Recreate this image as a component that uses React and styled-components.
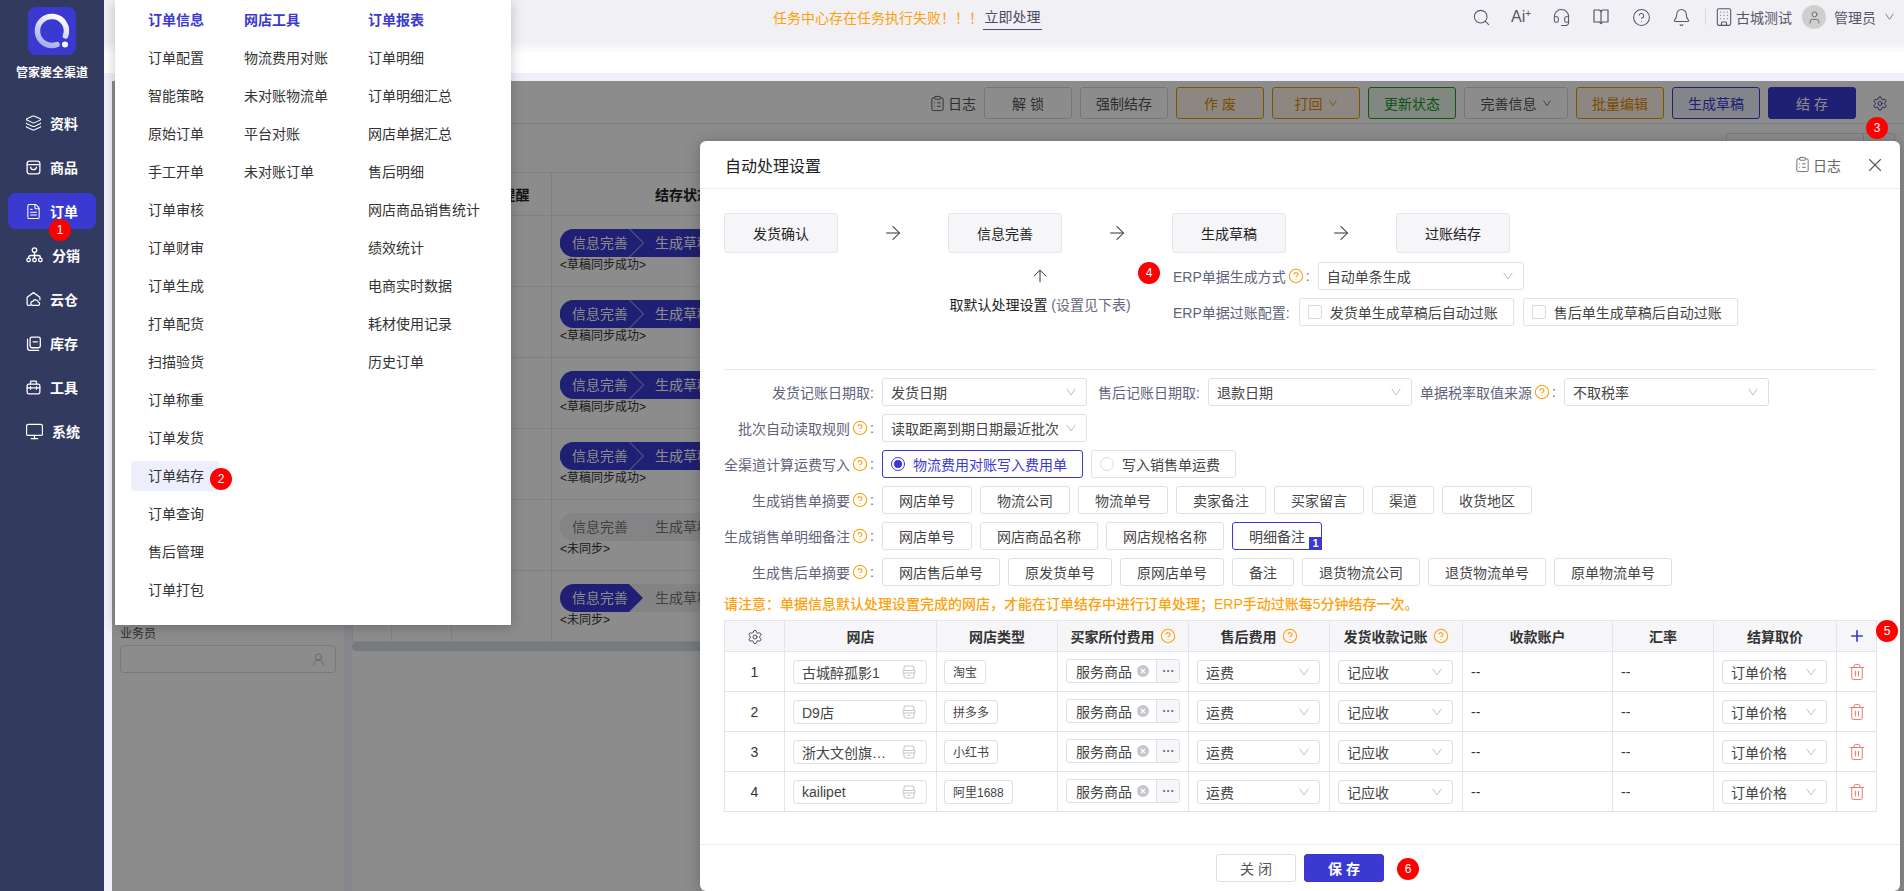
import React from "react";
import styled, { createGlobalStyle, css } from "styled-components";
import {
  Layers, FileText, Monitor, Search, Headset, CircleHelp, Bell, Building, User,
  ArrowRight, ArrowUp, ClipboardList, X, Settings, Plus, Trash2, Ellipsis, UserRound,
} from "lucide-react";

const BLUE = "#3a39d2";
const ORANGE = "#ff9f0a";
const LINE = "#e4e4ec";

const Global = createGlobalStyle`
  html, body { margin: 0; padding: 0; height: 100%; overflow: hidden; background: #fff; }
  body { font-family: "Liberation Sans", "Noto Sans CJK SC", sans-serif; font-size: 14px; color: #333; }
  #root { height: 100%; }
  * { box-sizing: border-box; }
`;

const Page = styled.div`
  position: relative;
  display: flex;
  width: 1904px;
  height: 891px;
  overflow: hidden;
`;

/* sidebar */
const Sidebar = styled.aside`
  width: 104px;
  flex: none;
  background: #333a60;
  display: flex;
  flex-direction: column;
  align-items: center;
  padding-top: 7px;
`;
const LogoTitle = styled.div`
  margin-top: 10px;
  height: 16px;
  line-height: 16px;
  font-size: 12px;
  font-weight: 700;
  color: #fff;
  white-space: nowrap;
`;
const Nav = styled.nav`
  margin-top: 24px;
  display: flex;
  flex-direction: column;
  gap: 8px;
  width: 88px;
`;
const NavItem = styled.div`
  position: relative;
  height: 36px;
  border-radius: 8px;
  display: flex;
  align-items: center;
  padding-left: 17px;
  gap: 8px;
  color: #fff;
  font-size: 14px;
  font-weight: 700;
  background: ${(p) => (p.$active ? BLUE : "transparent")};
`;
const NavIcon = styled.span`
  width: ${(p) => (p.$wide ? 19 : 17)}px;
  flex: none;
  display: flex;
  align-items: center;
  justify-content: center;
`;
const Badge = styled.span`
  position: absolute;
  left: ${(p) => p.$x}px;
  top: ${(p) => p.$y}px;
  width: 22px;
  height: 22px;
  margin: -11px 0 0 -11px;
  border-radius: 50%;
  background: #ff0000;
  color: #fff;
  font-size: 12px;
  font-weight: 400;
  display: flex;
  align-items: center;
  justify-content: center;
  z-index: 30;
`;

/* main column */
const Main = styled.div`
  flex: 1;
  min-width: 0;
  display: flex;
  flex-direction: column;
  background: #f1f1fb;
`;
const Header = styled.header`
  height: 73px;
  flex: none;
  background: linear-gradient(#f1f1f5 42px, #fff 54px);
`;
const HeaderBar = styled.div`
  height: 34px;
  display: flex;
  align-items: center;
  padding-left: 669px;
`;
const Warning = styled.span`
  color: ${ORANGE};
  font-size: 14px;
  white-space: nowrap;
`;
const HandleLink = styled.span`
  width: 59px;
  height: 26px;
  line-height: 26px;
  text-align: center;
  color: #4a4a60;
  border-bottom: 1px solid #4a4a78;
  white-space: nowrap;
`;
const HeaderTools = styled.div`
  margin-left: auto;
  display: flex;
  align-items: center;
  color: #55566a;
  padding-right: 10px;
  font-size: 14px;
`;
const ToolIcon = styled.span`
  width: 40px;
  display: flex;
  justify-content: center;
  align-items: center;
  font-size: 16px;
  sup { font-size: 10px; line-height: 1; margin-top: -6px; }
`;
const HeadDivider = styled.span`
  width: 1px;
  height: 16px;
  background: #d6d8e4;
  margin: 0 8px 0 4px;
`;
const CompanyName = styled.span`
  margin-left: 2px;
  white-space: nowrap;
`;
const Avatar = styled.span`
  width: 24px;
  height: 24px;
  margin: 0 8px 0 10px;
  border-radius: 50%;
  background: #cfcfcf;
  display: flex;
  align-items: center;
  justify-content: center;
  color: #666;
`;
const HeadChevron = styled.span`
  display: flex;
  margin-left: 9px;
  color: #777;
`;
const Band = styled.div`
  height: 8px;
  flex: none;
  background: #eff0fc;
`;
const Workspace = styled.div`
  flex: 1;
  min-height: 0;
  margin-left: 8px;
  position: relative;
  display: flex;
  background: #fff;
`;
const Overlay = styled.div`
  position: absolute;
  inset: 0;
  background: rgba(0, 0, 0, 0.45);
  z-index: 10;
`;
const LeftPanel = styled.div`
  width: 232px;
  flex: none;
  padding: 544px 0 0 8px;
`;
const FieldLabel = styled.div`
  height: 18px;
  line-height: 18px;
  font-size: 12px;
  color: #555;
  margin-bottom: 2px;
`;
const PersonInput = styled.div`
  width: 216px;
  height: 28px;
  border: 1px solid #dcdce4;
  border-radius: 4px;
  display: flex;
  align-items: center;
  justify-content: flex-end;
  padding-right: 9px;
  color: #aaa;
`;
const Splitter = styled.div`
  width: 8px;
  flex: none;
  background: #f2f2fc;
`;
const RightArea = styled.div`
  flex: 1;
  min-width: 0;
`;
const Toolbar = styled.div`
  height: 43px;
  border-bottom: 1px solid #e6e6ec;
  display: flex;
  justify-content: flex-end;
  align-items: flex-start;
  padding: 6px 16px 0 0;
  gap: 8px;
`;
const LogLink = styled.span`
  display: inline-flex;
  align-items: center;
  gap: 2px;
  color: ${(p) => p.$color || "#555"};
  height: ${(p) => (p.$bar ? "32px" : "auto")};
  font-size: 14px;
  white-space: nowrap;
`;
const toneStyles = {
  plain: css`border-color: #d8d8de; background: #fff; color: #555;`,
  orange: css`border-color: #f39200; background: #fff8ec; color: #e08a00;`,
  green: css`border-color: #18a218; background: #ebf8eb; color: #18981f;`,
  blue: css`border-color: ${BLUE}; background: #f0f0fd; color: ${BLUE};`,
  solid: css`border-color: ${BLUE}; background: ${BLUE}; color: #fff;`,
};
const ToolBtn = styled.button`
  width: ${(p) => p.$w || 88}px;
  height: 32px;
  border: 1px solid;
  border-radius: 3px;
  font: inherit;
  font-size: 14px;
  padding: 0;
  display: inline-flex;
  align-items: center;
  justify-content: center;
  gap: 3px;
  white-space: pre;
  ${(p) => toneStyles[p.$tone || "plain"]};
`;
const GearBtn = styled.span`
  width: 16px;
  height: 32px;
  margin-left: 8px;
  display: flex;
  align-items: center;
  justify-content: center;
  color: #3f3f95;
`;
const FilterRow = styled.div`
  height: 48px;
  display: flex;
  justify-content: flex-end;
  padding: 9px 9px 0 0;
`;
const MiniSearch = styled.div`
  width: 169px;
  height: 28px;
  border: 1px solid #dcdce4;
  border-radius: 3px;
  display: flex;
  justify-content: flex-end;
`;
const MiniAddon = styled.span`
  width: 31px;
  border-left: 1px solid #dcdce4;
`;
const BgTable = styled.table`
  border-collapse: collapse;
  table-layout: fixed;
  width: 900px;
  th, td { border: 1px solid #e9e9ee; }
  th { height: 43px; font-size: 14px; font-weight: 700; color: #222; }
  td { height: 71px; padding: 13px 0 0 8px; vertical-align: top; }
`;
const Chain = styled.div`
  width: 240px;
  height: 28px;
  display: flex;
  border-radius: 14px 0 0 14px;
  background: ${(p) => (p.$on ? BLUE : "#f0f0f6")};
`;
const FirstWrap = styled.div`
  filter: drop-shadow(1px 0 0 rgba(255, 255, 255, ${(p) => (p.$line ? 0.75 : 0)}));
`;
const FirstStep = styled.div`
  width: 83px;
  height: 28px;
  border-radius: 14px 0 0 14px;
  padding-left: 12px;
  line-height: 28px;
  clip-path: polygon(0 0, 69px 0, 100% 50%, 69px 100%, 0 100%);
  background: ${(p) => (p.$on ? BLUE : "#f0f0f6")};
  color: ${(p) => (p.$on ? "#fff" : "#777")};
  white-space: nowrap;
`;
const SecondStep = styled.div`
  padding-left: 12px;
  line-height: 28px;
  color: ${(p) => (p.$on ? "#fff" : "#777")};
  white-space: nowrap;
`;
const Caption = styled.div`
  font-size: 12px;
  line-height: 16px;
  color: #333;
`;
const HScroll = styled.div`
  width: 650px;
  height: 9px;
  border-radius: 4px;
  background: #d5dee7;
`;

/* cascading menu */
const MenuPanel = styled.div`
  position: absolute;
  left: 115px;
  top: 0;
  width: 396px;
  height: 625px;
  background: #fff;
  box-shadow: 0 2px 12px rgba(0, 0, 0, 0.22);
  z-index: 20;
  display: flex;
  padding: 1px 0 0 33px;
`;
const MenuCol = styled.div`
  width: ${(p) => p.$w}px;
  display: flex;
  flex-direction: column;
  align-items: flex-start;
`;
const MenuHead = styled.div`
  height: 38px;
  line-height: 38px;
  font-weight: 700;
  color: ${BLUE};
  white-space: nowrap;
`;
const MenuLink = styled.div`
  position: relative;
  height: 30px;
  line-height: 30px;
  margin: 4px 0 4px -17px;
  padding: 0 15px 0 17px;
  border-radius: 3px;
  color: #333;
  white-space: nowrap;
  background: ${(p) => (p.$active ? "#eeeffd" : "transparent")};
`;

/* modal */
const Modal = styled.div`
  position: absolute;
  left: 700px;
  top: 141px;
  width: 1200px;
  height: 750px;
  background: #fff;
  border-radius: 6px;
  box-shadow: 0 2px 16px rgba(0, 0, 0, 0.25);
  z-index: 20;
  display: flex;
  flex-direction: column;
`;
const ModalHead = styled.div`
  height: 48px;
  flex: none;
  border-bottom: 1px solid #eaeaf0;
  display: flex;
  align-items: center;
  padding: 0 14px 0 25px;
`;
const ModalTitle = styled.div`
  font-size: 16px;
  color: #222;
  flex: 1;
`;
const CloseX = styled.span`
  display: flex;
  margin-left: 23px;
  color: #555;
`;
const ModalBody = styled.div`
  flex: 1;
  min-height: 0;
  padding: 24px 24px 0;
`;
const FlowRow = styled.div`
  display: grid;
  grid-template-columns: 114px 110px 114px 110px 114px 110px 114px;
  align-items: center;
  justify-items: center;
  width: 786px;
`;
const FlowBox = styled.div`
  width: 114px;
  height: 40px;
  border: 1px solid #e6e6ee;
  border-radius: 3px;
  background: #f6f6f9;
  display: flex;
  align-items: center;
  justify-content: center;
  color: #222;
`;
const FlowLower = styled.div`
  display: flex;
  padding-left: 223px;
  margin-top: 9px;
`;
const DefaultBlock = styled.div`
  width: 186px;
  flex: none;
  display: flex;
  flex-direction: column;
  align-items: center;
  padding-top: 4px;
  color: #333;
`;
const DefaultText = styled.div`
  margin-top: 9px;
  height: 20px;
  line-height: 20px;
  font-size: 14px;
  white-space: nowrap;
  color: #222;
  span { color: #666a80; }
`;
const ConfigBlock = styled.div`
  position: relative;
  margin-left: 40px;
  display: flex;
  flex-direction: column;
  gap: 8px;
`;
const Divider = styled.div`
  height: 1px;
  background: #e8e8ee;
  margin: 43px 0 8px;
`;
const Form = styled.div`
  display: flex;
  flex-direction: column;
  gap: 8px;
`;
const Row = styled.div`
  height: 28px;
  display: flex;
  align-items: center;
  gap: ${(p) => p.$gap || 8}px;
`;
const Label = styled.div`
  ${(p) => p.$w && `width: ${p.$w}px;`}
  flex: none;
  display: flex;
  align-items: center;
  justify-content: flex-end;
  color: #62637a;
  font-size: 14px;
  white-space: nowrap;
  gap: 2px;
`;
const Help = styled(CircleHelp).attrs({ size: 16, strokeWidth: 1.6 })`
  color: ${ORANGE};
  flex: none;
`;
const Select = styled.div`
  width: ${(p) => (p.$w ? `${p.$w}px` : "100%")};
  height: ${(p) => p.$h || 28}px;
  flex: none;
  border: 1px solid #dedfe7;
  border-radius: 3px;
  background: #fff;
  display: flex;
  align-items: center;
  justify-content: space-between;
  padding: 0 8px;
  color: #444;
  white-space: nowrap;
  svg { color: #bfc0c8; flex: none; margin-right: 2px; }
`;
const Chip = styled.div`
  position: relative;
  height: 28px;
  flex: none;
  display: flex;
  align-items: center;
  gap: 8px;
  padding: ${(p) => (p.$control ? "0 15px 0 8px" : "0 16px")};
  border: 1px solid ${(p) => (p.$on ? BLUE : "#dedfe7")};
  border-radius: 3px;
  color: ${(p) => (p.$on && p.$control ? BLUE : "#444")};
  background: #fff;
  white-space: nowrap;
`;
const Corner = styled.span`
  position: absolute;
  right: -1px;
  bottom: -1px;
  width: 13px;
  height: 13px;
  background: ${BLUE};
  color: #fff;
  font-size: 11px;
  font-weight: 700;
  line-height: 13px;
  text-align: center;
`;
const Check = styled.span`
  width: 14px;
  height: 14px;
  flex: none;
  border: 1px solid #d9d9e2;
  border-radius: 2px;
`;
const Radio = styled.span`
  width: 14px;
  height: 14px;
  flex: none;
  border-radius: 50%;
  border: 1px solid ${(p) => (p.$on ? BLUE : "#dcdce4")};
  display: flex;
  align-items: center;
  justify-content: center;
  &::after {
    content: "";
    width: 8px;
    height: 8px;
    border-radius: 50%;
    background: ${(p) => (p.$on ? BLUE : "transparent")};
  }
`;
const Notice = styled.div`
  height: 20px;
  line-height: 20px;
  margin-top: 8px;
  color: ${ORANGE};
  font-weight: 500;
  white-space: nowrap;
`;
const GridWrap = styled.div`
  position: relative;
  margin-top: 6px;
  width: 1152px;
`;
const Grid = styled.table`
  border-collapse: collapse;
  table-layout: fixed;
  width: 1152px;
  th, td { border: 1px solid ${LINE}; padding: 0; }
  th {
    height: 31px;
    background: #f6f6f9;
    font-weight: 700;
    font-size: 14px;
    color: #333;
    text-align: center;
    white-space: nowrap;
  }
  td { height: 40px; }
`;
const ThInner = styled.span`
  display: inline-flex;
  align-items: center;
  justify-content: center;
  gap: 5px;
  vertical-align: middle;
  color: ${(p) => p.$color || "inherit"};
`;
const NumCell = styled.td`
  text-align: center;
  color: #333;
`;
const PadCell = styled.td`
  && { padding: 0 ${(p) => p.$pad ?? 9}px 0 ${(p) => p.$pad ?? 8}px; }
`;
const DashCell = styled.td`
  && { padding-left: 8px; }
  color: #333;
`;
const ShopBox = styled.div`
  height: 24px;
  border: 1px solid #dedfe7;
  border-radius: 3px;
  display: flex;
  align-items: center;
  padding: 0 10px 0 8px;
  gap: 6px;
  color: #444;
  svg { flex: none; color: #c6c7d0; }
`;
const ShopName = styled.span`
  flex: 1;
  min-width: 0;
  overflow: hidden;
  text-overflow: ellipsis;
  white-space: nowrap;
`;
const TypeTag = styled.span`
  display: inline-flex;
  align-items: center;
  height: 24px;
  padding: 0 8px;
  border: 1px solid #dedfe7;
  border-radius: 3px;
  font-size: 12px;
  color: #444;
`;
const FeeGroup = styled.div`
  height: 24px;
  margin-top: -1px;
  display: flex;
  border: 1px solid #dedfe7;
  border-radius: 3px;
`;
const FeeValue = styled.div`
  flex: 1;
  display: flex;
  align-items: center;
  gap: 5px;
  padding-left: 9px;
  color: #444;
  white-space: nowrap;
`;
const FeeMore = styled.div`
  width: 23px;
  flex: none;
  border-left: 1px solid #dedfe7;
  background: #f6f6f9;
  display: flex;
  align-items: center;
  justify-content: center;
  color: #555;
`;
const DelCell = styled.td`
  text-align: center;
  color: #f56c5c;
  svg { vertical-align: middle; }
`;
const ModalFoot = styled.div`
  height: 47px;
  flex: none;
  border-top: 1px solid #eaeaf0;
  display: flex;
  align-items: center;
  justify-content: center;
  gap: 8px;
`;
const FootBtn = styled.button`
  position: relative;
  width: 80px;
  height: 28px;
  border: 1px solid ${(p) => (p.$primary ? BLUE : "#dedfe7")};
  border-radius: 3px;
  background: ${(p) => (p.$primary ? BLUE : "#fff")};
  color: ${(p) => (p.$primary ? "#fff" : "#555")};
  font: inherit;
  font-weight: ${(p) => (p.$primary ? 700 : 400)};
  padding: 0;
  white-space: pre;
`;

/* drawings */
const Logo = () => (
  <svg width="48" height="48" viewBox="0 0 48 48">
    <defs>
      <linearGradient id="ring" x1="0.8" y1="0" x2="0.3" y2="1">
        <stop offset="0" stopColor="#ffffff" />
        <stop offset="1" stopColor="#aab0ee" />
      </linearGradient>
    </defs>
    <rect width="48" height="48" rx="8" fill={BLUE} />
    <path d="M37.5 29 A14.5 14.5 0 1 0 29 37.5" fill="none" stroke="url(#ring)" strokeWidth="5.5" strokeLinecap="round" />
    <circle cx="37" cy="37.5" r="3" fill="#fff" />
  </svg>
);
const sv = { width: 17, height: 17, viewBox: "0 0 20 20", fill: "none", stroke: "currentColor", strokeWidth: 1.5, strokeLinecap: "round", strokeLinejoin: "round" };
const BagIcon = () => (
  <svg {...sv}><rect x="2.5" y="2.5" width="15" height="15" rx="3" /><path d="M2.5 6.5h15M6.5 9.5c.5 4 6.5 4 7 0" /></svg>
);
const CloudHomeIcon = () => (
  <svg {...sv} width="18" height="18"><path d="M6 17.5H4a1.5 1.5 0 0 1-1.5-1.5V8L10 2.5 17.5 8v3" /><path d="M9 17.5a2.3 2.3 0 0 1 .3-4.6 3.3 3.3 0 0 1 6.3.8 2 2 0 0 1 .4 3.8z" /></svg>
);
const StockIcon = () => (
  <svg {...sv}><path d="M3 5v10a3 3 0 0 0 3 3h10" /><rect x="6" y="2.5" width="12" height="12.5" rx="2" /><path d="M9.5 8h5" /></svg>
);
const ToolboxIcon = () => (
  <svg {...sv}><rect x="2.5" y="6" width="15" height="11.5" rx="2" /><path d="M6.5 6V3.5a1 1 0 0 1 1-1h5a1 1 0 0 1 1 1V6M2.5 10.5h15M6.5 9v3M13.5 9v3" /></svg>
);
const BranchIcon = () => (
  <svg {...sv} width="19" height="18">
    <circle cx="10" cy="4.5" r="2.5" />
    <circle cx="3.5" cy="15.5" r="2" /><circle cx="10" cy="15.5" r="2" /><circle cx="16.5" cy="15.5" r="2" />
    <path d="M10 7v6.5M3.5 13.5V12.5a2 2 0 0 1 2-2h9a2 2 0 0 1 2 2v1" />
  </svg>
);
const ManualIcon = () => (
  <svg width="18" height="18" viewBox="0 0 18 18" fill="none" stroke="currentColor" strokeWidth="1.2" strokeLinejoin="round">
    <path d="M2 2h5.500L9 3.500 10.500 2H16v12h-5.500L9 15.500 7.500 14H2z" /><path d="M9 3.500v12" />
  </svg>
);
const ShopIcon = () => (
  <svg width="14" height="14" viewBox="0 0 14 14" fill="none" stroke="currentColor" strokeWidth="1.1">
    <path d="M2 6V3a2 2 0 0 1 2-2h6a2 2 0 0 1 2 2v3" />
    <rect x="1" y="5.5" width="12" height="2.5" rx="1" />
    <path d="M2 8v3.5a1.5 1.5 0 0 0 1.5 1.5h7a1.5 1.5 0 0 0 1.5-1.5V8M5.5 10.500h3" />
  </svg>
);
const ClearDot = () => (
  <svg width="12" height="12" viewBox="0 0 12 12">
    <circle cx="6" cy="6" r="6" fill="#c6c6ce" />
    <path d="M4 4l4 4M8 4l-4 4" stroke="#fff" strokeWidth="1.1" />
  </svg>
);
const Chev = ({ size = 10 }) => (
  <svg width={size} height={size * 0.8} viewBox="0 0 10 8" fill="none" stroke="currentColor" strokeWidth="1">
    <path d="M.7.8 5 7 9.300.8" />
  </svg>
);

const SIDE = [
  ["资料", <Layers key="a" size={18} strokeWidth={1.5} />],
  ["商品", <BagIcon key="b" />],
  ["订单", <FileText key="c" size={19} strokeWidth={1.5} />],
  ["分销", <BranchIcon key="d" />, true],
  ["云仓", <CloudHomeIcon key="e" />],
  ["库存", <StockIcon key="f" />],
  ["工具", <ToolboxIcon key="g" />],
  ["系统", <Monitor key="h" size={19} strokeWidth={1.5} />, true],
];
const MENU_A = ["订单配置", "智能策略", "原始订单", "手工开单", "订单审核", "订单财审", "订单生成", "打单配货", "扫描验货", "订单称重", "订单发货", "订单结存", "订单查询", "售后管理", "订单打包"];
const MENU_B = ["物流费用对账", "未对账物流单", "平台对账", "未对账订单"];
const MENU_C = ["订单明细", "订单明细汇总", "网店单据汇总", "售后明细", "网店商品销售统计", "绩效统计", "电商实时数据", "耗材使用记录", "历史订单"];

const BG_ROWS = [
  { first: true, second: true, cap: "<草稿同步成功>" },
  { first: true, second: true, cap: "<草稿同步成功>" },
  { first: true, second: true, cap: "<草稿同步成功>" },
  { first: true, second: true, cap: "<草稿同步成功>" },
  { first: false, second: false, cap: "<未同步>" },
  { first: true, second: false, cap: "<未同步>" },
];
const SHOPS = [
  ["古城醉孤影1", "淘宝"],
  ["D9店", "拼多多"],
  ["浙大文创旗舰店铺", "小红书"],
  ["kailipet", "阿里1688"],
];
const COLS = [60, 152, 121, 131, 141, 133, 150, 101, 123, 40];
const WARNING_TEXT = "任务中心存在任务执行失败\uFF01\uFF01\uFF01";
const NOTICE_TEXT = "请注意\uFF1A单据信息默认处理设置完成的网店\uFF0C才能在订单结存中进行订单处理\uFF1BERP手动过账每5分钟结存一次。";

export default function App() {
  return (
    <Page>
      <Global />
      <Sidebar>
        <Logo />
        <LogoTitle>管家婆全渠道</LogoTitle>
        <Nav>
          {SIDE.map(([name, icon, wide]) => (
            <NavItem key={name} $active={name === "订单"}>
              <NavIcon $wide={wide}>{icon}</NavIcon>
              {name}
              {name === "订单" && <Badge $x={52} $y={37}>1</Badge>}
            </NavItem>
          ))}
        </Nav>
      </Sidebar>

      <Main>
        <Header>
          <HeaderBar>
            <Warning>{WARNING_TEXT}</Warning>
            <HandleLink>立即处理</HandleLink>
            <HeaderTools>
              <ToolIcon><Search size={19} strokeWidth={1.3} /></ToolIcon>
              <ToolIcon>Ai<sup>+</sup></ToolIcon>
              <ToolIcon><Headset size={19} strokeWidth={1.3} /></ToolIcon>
              <ToolIcon><ManualIcon /></ToolIcon>
              <ToolIcon><CircleHelp size={19} strokeWidth={1.3} /></ToolIcon>
              <ToolIcon><Bell size={19} strokeWidth={1.3} /></ToolIcon>
              <HeadDivider />
              <Building size={20} strokeWidth={1.3} />
              <CompanyName>古城测试</CompanyName>
              <Avatar><User size={15} strokeWidth={1.4} /></Avatar>
              管理员
              <HeadChevron><Chev size={9} /></HeadChevron>
            </HeaderTools>
          </HeaderBar>
        </Header>
        <Band />
        <Workspace>
          <LeftPanel>
            <FieldLabel>业务员</FieldLabel>
            <PersonInput><UserRound size={15} strokeWidth={1.2} /></PersonInput>
          </LeftPanel>
          <Splitter />
          <RightArea>
            <Toolbar>
              <LogLink $bar><ClipboardList size={17} strokeWidth={1.3} />日志</LogLink>
              <ToolBtn>解 锁</ToolBtn>
              <ToolBtn>强制结存</ToolBtn>
              <ToolBtn $tone="orange">作 废</ToolBtn>
              <ToolBtn $tone="orange">打回 <Chev size={8} /></ToolBtn>
              <ToolBtn $tone="green">更新状态</ToolBtn>
              <ToolBtn $w={104}>完善信息 <Chev size={8} /></ToolBtn>
              <ToolBtn $tone="orange">批量编辑</ToolBtn>
              <ToolBtn $tone="blue">生成草稿</ToolBtn>
              <ToolBtn $tone="solid">结 存</ToolBtn>
              <GearBtn><Settings size={17} strokeWidth={1.4} /></GearBtn>
            </Toolbar>
            <FilterRow>
              <MiniSearch><MiniAddon /></MiniSearch>
            </FilterRow>
            <BgTable>
              <colgroup>
                <col width="39" /><col width="60" /><col width="100" /><col width="263" /><col />
              </colgroup>
              <thead>
                <tr><th /><th /><th>结存提醒</th><th>结存状态</th><th /></tr>
              </thead>
              <tbody>
                {BG_ROWS.map((r, i) => (
                  <tr key={i}>
                    <td /><td /><td />
                    <td>
                      <Chain $on={r.second}>
                        <FirstWrap $line={r.first === r.second}>
                          <FirstStep $on={r.first}>信息完善</FirstStep>
                        </FirstWrap>
                        <SecondStep $on={r.second}>生成草稿</SecondStep>
                      </Chain>
                      <Caption>{r.cap}</Caption>
                    </td>
                    <td />
                  </tr>
                ))}
              </tbody>
            </BgTable>
            <HScroll />
          </RightArea>
          <Overlay />
        </Workspace>
      </Main>

      <MenuPanel>
        <MenuCol $w={96}>
          <MenuHead>订单信息</MenuHead>
          {MENU_A.map((m) => (
            <MenuLink key={m} $active={m === "订单结存"}>
              {m}
              {m === "订单结存" && <Badge $x={90} $y={18}>2</Badge>}
            </MenuLink>
          ))}
        </MenuCol>
        <MenuCol $w={124}>
          <MenuHead>网店工具</MenuHead>
          {MENU_B.map((m) => <MenuLink key={m}>{m}</MenuLink>)}
        </MenuCol>
        <MenuCol $w={120}>
          <MenuHead>订单报表</MenuHead>
          {MENU_C.map((m) => <MenuLink key={m}>{m}</MenuLink>)}
        </MenuCol>
      </MenuPanel>

      <Badge $x={1877} $y={128}>3</Badge>

      <Modal>
        <ModalHead>
          <ModalTitle>自动处理设置</ModalTitle>
          <LogLink $color="#666"><ClipboardList size={17} strokeWidth={1.3} />日志</LogLink>
          <CloseX><X size={22} strokeWidth={1.2} /></CloseX>
        </ModalHead>
        <ModalBody>
          <FlowRow>
            <FlowBox>发货确认</FlowBox>
            <ArrowRight size={22} strokeWidth={1.1} />
            <FlowBox>信息完善</FlowBox>
            <ArrowRight size={22} strokeWidth={1.1} />
            <FlowBox>生成草稿</FlowBox>
            <ArrowRight size={22} strokeWidth={1.1} />
            <FlowBox>过账结存</FlowBox>
          </FlowRow>
          <FlowLower>
            <DefaultBlock>
              <ArrowUp size={20} strokeWidth={1.2} />
              <DefaultText>取默认处理设置 <span>(设置见下表)</span></DefaultText>
            </DefaultBlock>
            <ConfigBlock>
              <Badge $x={-24} $y={11}>4</Badge>
              <Row>
                <Label>ERP单据生成方式<Help />:</Label>
                <Select $w={206}>自动单条生成<Chev /></Select>
              </Row>
              <Row $gap={9}>
                <Label>ERP单据过账配置:</Label>
                <Chip $control><Check />发货单生成草稿后自动过账</Chip>
                <Chip $control><Check />售后单生成草稿后自动过账</Chip>
              </Row>
            </ConfigBlock>
          </FlowLower>
          <Divider />
          <Form>
            <Row>
              <Label $w={150}>发货记账日期取:</Label>
              <Select $w={205}>发货日期<Chev /></Select>
              <Label $w={105}>售后记账日期取:</Label>
              <Select $w={204}>退款日期<Chev /></Select>
              <Label $w={136}>单据税率取值来源<Help />:</Label>
              <Select $w={205}>不取税率<Chev /></Select>
            </Row>
            <Row>
              <Label $w={150}>批次自动读取规则<Help />:</Label>
              <Select $w={205}>读取距离到期日期最近批次<Chev /></Select>
            </Row>
            <Row>
              <Label $w={150}>全渠道计算运费写入<Help />:</Label>
              <Chip $control $on><Radio $on />物流费用对账写入费用单</Chip>
              <Chip $control><Radio />写入销售单运费</Chip>
            </Row>
            <Row>
              <Label $w={150}>生成销售单摘要<Help />:</Label>
              {["网店单号", "物流公司", "物流单号", "卖家备注", "买家留言", "渠道", "收货地区"].map((t) => <Chip key={t}>{t}</Chip>)}
            </Row>
            <Row>
              <Label $w={150}>生成销售单明细备注<Help />:</Label>
              <Chip>网店单号</Chip>
              <Chip>网店商品名称</Chip>
              <Chip>网店规格名称</Chip>
              <Chip $on>明细备注<Corner>1</Corner></Chip>
            </Row>
            <Row>
              <Label $w={150}>生成售后单摘要<Help />:</Label>
              {["网店售后单号", "原发货单号", "原网店单号", "备注", "退货物流公司", "退货物流单号", "原单物流单号"].map((t) => <Chip key={t}>{t}</Chip>)}
            </Row>
          </Form>
          <Notice>{NOTICE_TEXT}</Notice>
          <GridWrap>
            <Badge $x={1163} $y={11}>5</Badge>
            <Grid>
              <colgroup>{COLS.map((w, i) => <col key={i} width={w} />)}</colgroup>
              <thead>
                <tr>
                  <th><ThInner><Settings size={16} strokeWidth={1.3} /></ThInner></th>
                  <th>网店</th>
                  <th>网店类型</th>
                  <th><ThInner>买家所付费用<Help /></ThInner></th>
                  <th><ThInner>售后费用<Help /></ThInner></th>
                  <th><ThInner>发货收款记账<Help /></ThInner></th>
                  <th>收款账户</th>
                  <th>汇率</th>
                  <th>结算取价</th>
                  <th><ThInner $color={BLUE}><Plus size={18} strokeWidth={2.2} /></ThInner></th>
                </tr>
              </thead>
              <tbody>
                {SHOPS.map(([shop, type], i) => (
                  <tr key={shop}>
                    <NumCell>{i + 1}</NumCell>
                    <PadCell>
                      <ShopBox><ShopName>{shop}</ShopName><ShopIcon /></ShopBox>
                    </PadCell>
                    <PadCell $pad={7}><TypeTag>{type}</TypeTag></PadCell>
                    <PadCell $pad={8}>
                      <FeeGroup>
                        <FeeValue>服务商品<ClearDot /></FeeValue>
                        <FeeMore><Ellipsis size={14} strokeWidth={1.5} /></FeeMore>
                      </FeeGroup>
                    </PadCell>
                    <PadCell><Select $h={24}>运费<Chev /></Select></PadCell>
                    <PadCell><Select $h={24}>记应收<Chev /></Select></PadCell>
                    <DashCell>--</DashCell>
                    <DashCell>--</DashCell>
                    <PadCell><Select $h={24}>订单价格<Chev /></Select></PadCell>
                    <DelCell><Trash2 size={18} strokeWidth={1.2} /></DelCell>
                  </tr>
                ))}
              </tbody>
            </Grid>
          </GridWrap>
        </ModalBody>
        <ModalFoot>
          <FootBtn>关 闭</FootBtn>
          <FootBtn $primary>保 存<Badge $x={103} $y={14}>6</Badge></FootBtn>
        </ModalFoot>
      </Modal>
    </Page>
  );
}
